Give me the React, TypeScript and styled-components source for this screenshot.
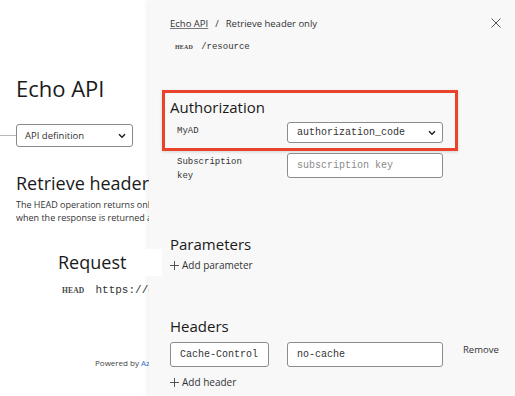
import React from 'react'
import styled, { createGlobalStyle } from 'styled-components'

const GlobalStyle = createGlobalStyle`
  html, body {
    margin: 0;
    padding: 0;
    background: #ffffff;
  }
  body {
    font-family: "Open Sans", "Noto Sans", sans-serif;
    color: #1f1f1f;
  }
`

const sans = `"Open Sans", "Noto Sans", sans-serif`
const mono = `"Liberation Mono", "Courier New", monospace`

const Page = styled.div`
  display: flex;
  width: 515px;
  height: 396px;
  overflow: hidden;
`

const LeftPane = styled.div`
  width: 149px;
  flex-shrink: 0;
  padding-top: 73px;
  box-sizing: border-box;
  white-space: nowrap;
`

const Title = styled.h1`
  margin: 0 0 0 16px;
  font: 400 22px/30px ${sans};
  color: #1a1a1a;
`

const DefinitionRow = styled.div`
  display: flex;
  align-items: center;
  margin-top: 21px;
`

const Rule = styled.div`
  width: 16px;
  height: 1px;
  background: #b8b8b8;
`

const DefinitionSelect = styled.div`
  width: 117px;
  height: 23px;
  box-sizing: border-box;
  border: 1px solid #8a8a8a;
  border-radius: 3px;
  display: flex;
  align-items: center;
  justify-content: space-between;
  padding: 0 6px 0 8px;
  font: 400 9.5px ${sans};
  color: #333;
`

const OperationTitle = styled.h2`
  margin: 24px 0 0 16px;
  font: 400 18px/24px ${sans};
  color: #1a1a1a;
  overflow: hidden;
`

const Description = styled.p`
  margin: 4px 0 0 16px;
  font: 400 9px/12.5px ${sans};
  color: #333;
  overflow: hidden;
`

const RequestBlock = styled.div`
  position: relative;
  z-index: 2;
  width: 162px;
  height: 27px;
  margin-top: 25px;
  background: #ffffff;
  box-sizing: border-box;
  padding-left: 58px;
  font: 400 18px/27px ${sans};
  color: #1a1a1a;
`

const RequestLine = styled.div`
  display: flex;
  align-items: baseline;
  gap: 11px;
  margin: 8px 0 0 62px;
  overflow: hidden;
`

const Verb = styled.span<{ $size: number }>`
  font: 700 ${p => p.$size}px ${`"Liberation Serif", serif`};
  letter-spacing: 0.2px;
  color: #444;
`

const Url = styled.span<{ $size: number }>`
  font: 400 ${p => p.$size}px ${mono};
  color: #333;
`

const Powered = styled.div`
  margin: 61px 0 0 95px;
  font: 400 8px ${sans};
  color: #444;
  overflow: hidden;
  span { color: #2f6fcf; }
`

const Panel = styled.div`
  flex: 1;
  background: #f8f8f8;
  box-shadow: -2px 0 5px rgba(0, 0, 0, 0.06);
  padding: 15px 0 0 21px;
  box-sizing: border-box;
  position: relative;
  z-index: 1;
`

const Breadcrumb = styled.div`
  display: flex;
  align-items: center;
  justify-content: space-between;
  padding-right: 13px;
  height: 16px;
  font: 400 9.5px ${sans};
  color: #333;
  a {
    color: #333;
    text-decoration: underline;
    text-decoration-color: #777;
  }
  i {
    font-style: normal;
    margin: 0 7px;
  }
`

const CloseButton = styled.button`
  border: none;
  background: none;
  padding: 0;
  width: 12px;
  height: 12px;
  display: flex;
  color: #444;
`

const OperationLine = styled.div`
  display: flex;
  align-items: baseline;
  gap: 8px;
  margin: 11px 0 0 5px;
`

const AuthBox = styled.div`
  margin: 38px 0 0 -8px;
  width: 296px;
  height: 61px;
  box-sizing: border-box;
  border: 3px solid #e8442c;
  padding: 4px 0 0 5px;
  box-shadow: 0 1px 3px rgba(0, 0, 0, 0.15);
`

const SectionTitle = styled.h3<{ $top: number }>`
  margin: ${p => p.$top}px 0 0 0;
  font: 400 15px/20px ${sans};
  color: #1a1a1a;
`

const FieldRow = styled.div<{ $top: number }>`
  display: grid;
  grid-template-columns: 110px 156px;
  align-items: start;
  margin-top: ${p => p.$top}px;
  padding-left: 7px;
`

const Label = styled.div`
  font: 400 9px/14px ${mono};
  color: #333;
  padding-top: 2px;
`

const Field = styled.div<{ $h: number; $muted?: boolean }>`
  height: ${p => p.$h}px;
  box-sizing: border-box;
  border: 1px solid #8c8c8c;
  border-radius: 3px;
  background: #ffffff;
  display: flex;
  align-items: center;
  justify-content: space-between;
  padding: 0 6px 0 9px;
  font: 400 10px ${mono};
  color: ${p => (p.$muted ? '#8a8a8a' : '#333')};
`

const AddLink = styled.div<{ $top: number }>`
  display: flex;
  align-items: center;
  gap: 3px;
  margin-top: ${p => p.$top}px;
  font: 400 10px ${sans};
  color: #333;
`

const HeaderRow = styled.div`
  display: grid;
  grid-template-columns: 99px 156px auto;
  column-gap: 18px;
  margin-top: 6px;
  align-items: start;
`

const RemoveLink = styled.div`
  font: 400 9.5px ${sans};
  color: #333;
  padding: 1px 0 0 2px;
`

const Chevron = () => (
  <svg width="8" height="6" viewBox="0 0 8 6">
    <path d="M1 1.2 L4 4.2 L7 1.2" fill="none" stroke="#222" strokeWidth="1.5" />
  </svg>
)

const Plus = () => (
  <svg width="9" height="9" viewBox="0 0 9 9">
    <path d="M4.5 0 V9 M0 4.5 H9" stroke="#444" strokeWidth="0.9" />
  </svg>
)

export default function App() {
  return (
    <Page>
      <GlobalStyle />
      <LeftPane>
        <Title>Echo API</Title>
        <DefinitionRow>
          <Rule />
          <DefinitionSelect>
            API definition
            <Chevron />
          </DefinitionSelect>
        </DefinitionRow>
        <OperationTitle>Retrieve header only</OperationTitle>
        <Description>
          The HEAD operation returns only the headers.
          <br />
          when the response is returned as well.
        </Description>
        <RequestBlock>Request</RequestBlock>
        <RequestLine>
          <Verb $size={7.5}>HEAD</Verb>
          <Url $size={11}>https://echoapi.cloudapp.net</Url>
        </RequestLine>
        <Powered>
          Powered by <span>Azure API Management</span>
        </Powered>
      </LeftPane>

      <Panel>
        <Breadcrumb>
          <div>
            <a>Echo API</a>
            <i>/</i>
            Retrieve header only
          </div>
          <CloseButton aria-label="Close">
            <svg width="12" height="12" viewBox="0 0 12 12">
              <path d="M1.5 1.5 L10.5 10.5 M10.5 1.5 L1.5 10.5" stroke="#555" strokeWidth="1" />
            </svg>
          </CloseButton>
        </Breadcrumb>
        <OperationLine>
          <Verb $size={6}>HEAD</Verb>
          <Url $size={9}>/resource</Url>
        </OperationLine>

        <AuthBox>
          <SectionTitle $top={0}>Authorization</SectionTitle>
          <FieldRow $top={5}>
            <Label>MyAD</Label>
            <Field $h={21}>
              authorization_code
              <Chevron />
            </Field>
          </FieldRow>
        </AuthBox>

        <FieldRow $top={2}>
          <Label>
            Subscription
            <br />
            key
          </Label>
          <Field $h={25} $muted>
            subscription key
          </Field>
        </FieldRow>

        <SectionTitle $top={51}>Parameters</SectionTitle>
        <AddLink $top={4}>
          <Plus />
          Add parameter
        </AddLink>

        <SectionTitle $top={44}>Headers</SectionTitle>
        <HeaderRow>
          <Field $h={25}>Cache-Control</Field>
          <Field $h={25}>no-cache</Field>
          <RemoveLink>Remove</RemoveLink>
        </HeaderRow>
        <AddLink $top={8}>
          <Plus />
          Add header
        </AddLink>
      </Panel>
    </Page>
  )
}
